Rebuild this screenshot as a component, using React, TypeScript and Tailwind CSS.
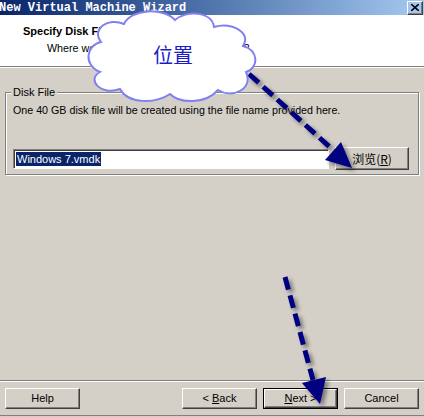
import React from "react";

const raised =
  "border border-t-white border-l-white border-r-[#404040] border-b-[#404040] shadow-[inset_-1px_-1px_0_#808080]";

function WinButton({
  children,
  isDefault,
  className = "",
}: {
  children: React.ReactNode;
  isDefault?: boolean;
  className?: string;
}) {
  if (isDefault) {
    return (
      <div className={`border border-black ${className}`}>
        <div
          className={`${raised} h-full w-full flex items-center justify-center bg-[#d4d0c8] text-black`}
        >
          {children}
        </div>
      </div>
    );
  }
  return (
    <div
      className={`${raised} flex items-center justify-center bg-[#d4d0c8] text-black ${className}`}
    >
      {children}
    </div>
  );
}

function Overlay() {
  // cloud callout + dashed arrows drawn over the dialog
  return (
    <svg
      className="absolute left-0 top-0 pointer-events-none"
      width="424"
      height="417"
      viewBox="0 0 424 417"
    >
      <defs>
        <filter id="shadow" x="-20%" y="-20%" width="140%" height="140%">
          <feGaussianBlur in="SourceAlpha" stdDeviation="2" />
          <feOffset dx="3" dy="3" result="b" />
          <feComponentTransfer>
            <feFuncA type="linear" slope="0.45" />
          </feComponentTransfer>
          <feMerge>
            <feMergeNode />
            <feMergeNode in="SourceGraphic" />
          </feMerge>
        </filter>
      </defs>

      <g filter="url(#shadow)">
        <line
          x1="249"
          y1="74"
          x2="333"
          y2="150"
          stroke="#000080"
          strokeWidth="5"
          strokeDasharray="13 6"
        />
        <polygon points="325,160 341,142 352,168" fill="#000080" />
        <line
          x1="285"
          y1="277"
          x2="313"
          y2="380"
          stroke="#000080"
          strokeWidth="5"
          strokeDasharray="13 6"
        />
        <polygon points="302,383 326,377 320,404" fill="#000080" />
      </g>

      <path
        d="M101,42 C91,29 108,17 124,24 C131,9 163,7 175,20 C186,10 212,11 214,27 C231,22 252,32 243,46 C259,50 259,68 246,72 C254,89 232,99 218,90 C206,104 180,104 170,94 C155,104 128,104 120,89 C101,96 86,80 100,72 C83,65 86,45 101,42 Z"
        fill="#ffffff"
        stroke="#8080f0"
        strokeWidth="2"
      />
      <text
        x="173"
        y="63"
        textAnchor="middle"
        fontSize="20"
        fill="#1c1cc8"
        fontFamily="'Noto Sans CJK SC', sans-serif"
      >
        位置
      </text>
    </svg>
  );
}

export default function App() {
  return (
    <div className="relative w-[424px] h-[417px] overflow-hidden bg-[#d4d0c8] flex flex-col font-['Liberation_Sans',_sans-serif] text-[11px] text-black">
      {/* title bar */}
      <div className="h-[15px] shrink-0 flex items-center justify-between bg-gradient-to-r from-[#0a246a] to-[#a6caf0]">
        <span className="font-['Liberation_Mono',_monospace] font-bold text-[12px] leading-none text-white -ml-px">
          New Virtual Machine Wizard
        </span>
        <div className={`${raised} mr-[1px] w-[16px] h-[14px] flex items-center justify-center`}>
          <svg width="8" height="7" viewBox="0 0 8 7">
            <path d="M0,0 L8,7 M8,0 L0,7" stroke="#000" strokeWidth="1.6" />
          </svg>
        </div>
      </div>

      {/* header */}
      <div className="h-[52px] shrink-0 bg-white border-b border-[#808080]">
        <div className="pl-[23px] pt-[10px] font-bold leading-[13px]">Specify Disk File</div>
        <div className="pl-[47px] pt-[4px] leading-[13px] text-[10.7px]">
          Where would you like to store the disk file?
        </div>
      </div>
      <div className="h-px shrink-0 bg-white" />

      {/* group box */}
      <div className="mx-[5px] mt-[24px] h-[83px] shrink-0 border border-[#808080] shadow-[inset_1px_1px_0_#fff,1px_1px_0_#fff] px-[7px]">
        <div className="-mt-[7px] -ml-[2px] w-fit h-[13px] bg-[#d4d0c8] px-[2px] leading-[13px]">
          Disk File
        </div>
        <div className="mt-[5px] leading-[13px] text-[10.7px]">
          One 40 GB disk file will be created using the file name provided here.
        </div>
        <div className="mt-[30px] flex items-center gap-[6px]">
          <div className="w-[316px] h-[20px] bg-white border border-t-[#808080] border-l-[#808080] border-r-white border-b-white shadow-[inset_1px_1px_0_#404040] flex items-center pl-[2px]">
            <span className="bg-[#0a246a] text-white leading-[14px] px-px">Windows 7.vmdk</span>
          </div>
          <WinButton className="w-[74px] h-[23px]">
            <span className="font-['Noto_Sans_CJK_SC',_sans-serif] text-[12px]">
              浏览(<span className="underline">R</span>)
            </span>
          </WinButton>
        </div>
      </div>

      <div className="flex-1" />

      {/* bottom bar */}
      <div className="shrink-0 border-t border-[#808080]">
        <div className="h-px bg-white" />
        <div className="flex items-center px-[5px] pt-[6px] pb-[6px]">
          <WinButton className="w-[75px] h-[21px]">Help</WinButton>
          <div className="flex-1" />
          <WinButton className="w-[75px] h-[21px]">
            &lt;&nbsp;<span className="underline">B</span>ack
          </WinButton>
          <WinButton isDefault className="ml-[6px] w-[75px] h-[21px]">
            <span className="underline">N</span>ext &gt;
          </WinButton>
          <WinButton className="ml-[6px] w-[75px] h-[21px]">Cancel</WinButton>
        </div>
        <div className="h-px bg-[#808080]" />
        <div className="h-px bg-[#d4d0c8]" />
      </div>

      <Overlay />
    </div>
  );
}
